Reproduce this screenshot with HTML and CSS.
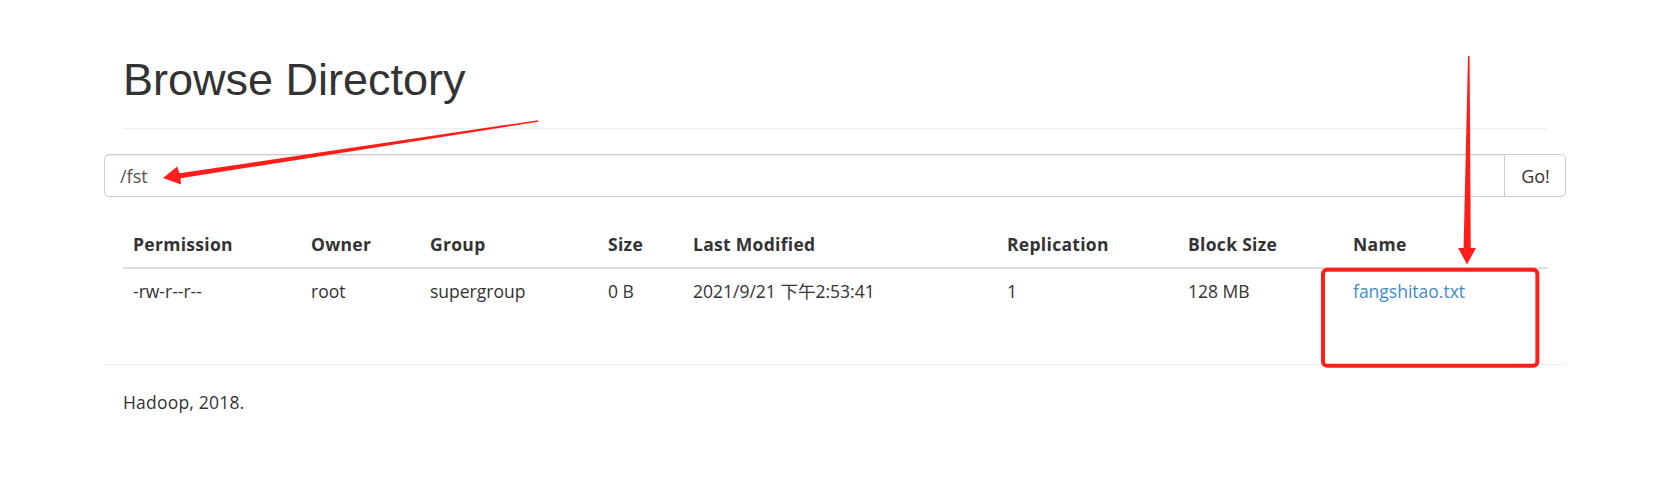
FILE: index.html
```html
<!DOCTYPE html>
<html lang="zh-CN">
<head>
<meta charset="utf-8">
<title>Browsing HDFS</title>
<link rel="stylesheet" href="styles.css">
</head>
<body>
<div class="page">
  <div class="page-header">
    <h1>Browse Directory</h1>
  </div>

  <form class="input-group">
    <input class="form-control" type="text" value="/fst">
    <button class="btn-go" type="button">Go!</button>
  </form>

  <div class="table-wrap">
    <table class="table">
      <thead>
        <tr>
          <th class="c-perm">Permission</th>
          <th class="c-owner">Owner</th>
          <th class="c-group">Group</th>
          <th class="c-size">Size</th>
          <th class="c-mod">Last Modified</th>
          <th class="c-rep">Replication</th>
          <th class="c-block">Block Size</th>
          <th class="c-name">Name</th>
        </tr>
      </thead>
      <tbody>
        <tr>
          <td>-rw-r--r--</td>
          <td>root</td>
          <td>supergroup</td>
          <td>0 B</td>
          <td>2021/9/21 下午2:53:41</td>
          <td>1</td>
          <td>128 MB</td>
          <td><a href="#">fangshitao.txt</a></td>
        </tr>
      </tbody>
    </table>
  </div>

  <hr class="footer-rule">
  <div class="footer">
    <p>Hadoop, 2018.</p>
  </div>
</div>

<svg class="annotations" width="1680" height="502" viewBox="0 0 1680 502" aria-hidden="true">
  <polygon class="red-fill" points="538,120.2 538.3,121.8 180.6,178.2 181,184.6 163,178 177.2,166.6 179.6,173.2"/>
  <polygon class="red-fill" points="1468,56 1469.6,56 1470.8,248 1476,248 1467,264.5 1458.2,248 1463.6,248"/>
  <rect class="red-stroke" x="1323" y="269.8" width="214.4" height="96" rx="4" ry="4"/>
</svg>
</body>
</html>
```

FILE: styles.css
```css
html, body {
  margin: 0;
  padding: 0;
  background: #fff;
}

body {
  font-family: "Open Sans", "Noto Sans CJK SC", sans-serif;
  font-size: 17.5px;
  line-height: 25px;
  color: #333;
  width: 1680px;
  height: 502px;
  overflow: hidden;
  position: relative;
}

.page {
  width: 1462px;
  margin-left: 104px;
  padding-top: 55px;
}

.page-header {
  margin: 0 19px 25px 19px;
  padding-bottom: 11px;
  border-bottom: 1px solid #eee;
}

.page-header h1 {
  margin: 0 0 12.5px 0;
  font-family: "Liberation Sans", Arial, sans-serif;
  font-weight: 400;
  font-size: 45px;
  line-height: 49.5px;
  color: #333;
}

.input-group {
  display: flex;
  height: 43px;
  margin: 0 0 25px 0;
}

.form-control {
  flex: 1;
  min-width: 0;
  box-sizing: border-box;
  height: 43px;
  margin: 0;
  padding: 0 15px 0 15px;
  font-family: "Open Sans", sans-serif;
  font-size: 18px;
  color: #555;
  background: #fff;
  border: 1px solid #ccc;
  border-right: 0;
  border-radius: 5px 0 0 5px;
  box-shadow: inset 0 1px 1px rgba(0, 0, 0, 0.075);
  outline: none;
}

.btn-go {
  box-sizing: border-box;
  width: 62px;
  height: 43px;
  margin: 0;
  padding: 0 0 0 1px;
  font-family: "Open Sans", sans-serif;
  font-size: 18px;
  color: #333;
  background: #fff;
  border: 1px solid #ccc;
  border-radius: 0 5px 5px 0;
}

.table-wrap {
  padding: 0 18px 25px 19px;
}

.table {
  width: 1425px;
  table-layout: fixed;
  border-collapse: collapse;
  border-spacing: 0;
  margin: 0;
}

.table th,
.table td {
  box-sizing: border-box;
  padding: 10px;
  text-align: left;
  vertical-align: top;
  line-height: 25px;
  white-space: nowrap;
}

.table th {
  font-weight: 700;
  border-bottom: 2px solid #ddd;
  letter-spacing: 0.3px;
}

.c-perm { width: 178px; }
.c-owner { width: 119px; }
.c-group { width: 178px; }
.c-size { width: 85px; }
.c-mod { width: 314px; }
.c-rep { width: 181px; }
.c-block { width: 165px; }
.c-name { width: 205px; }

.table a {
  color: #428bca;
  text-decoration: none;
}

.footer-rule {
  margin: 25px 0 25px 0;
  border: 0;
  border-top: 1px solid #eee;
  height: 0;
}

.footer {
  padding: 0 19px;
}

.footer p {
  margin: 0;
  letter-spacing: 0.2px;
}

.annotations {
  position: absolute;
  top: 0;
  left: 0;
  pointer-events: none;
}

.red-fill {
  fill: #ff1f1a;
}

.red-stroke {
  fill: none;
  stroke: #ff1f1a;
  stroke-width: 4;
}
```
